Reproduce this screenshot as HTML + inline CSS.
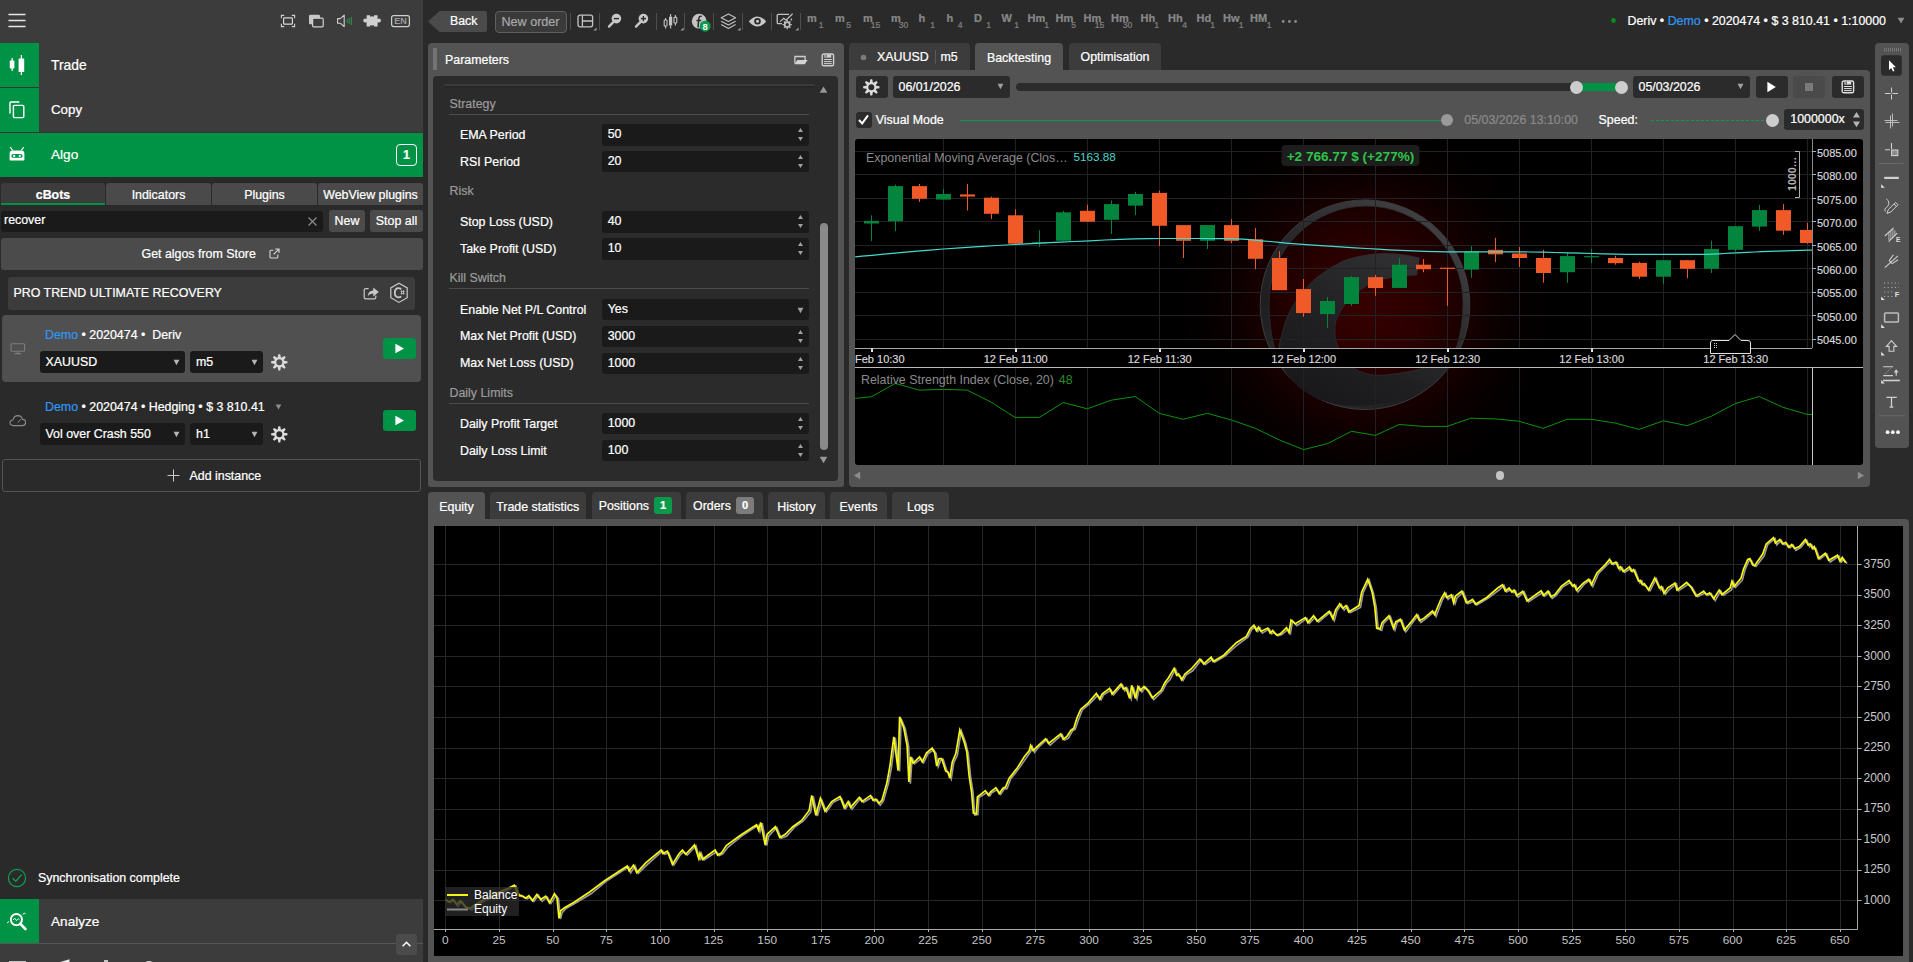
<!DOCTYPE html>
<html lang="en"><head><meta charset="utf-8"><title>cTrader Algo Backtesting</title>
<style>
html,body{margin:0;padding:0;background:#2a2a2a;}
body{width:1913px;height:962px;overflow:hidden;position:relative;font-family:"Liberation Sans",sans-serif;font-size:12.4px;color:#fff;}
#root{position:absolute;left:0;top:0;width:1913px;height:962px;overflow:hidden;background:#2a2a2a;}
#root div,#root svg{position:absolute;box-sizing:border-box;}
.t{white-space:nowrap;-webkit-text-stroke:0.22px currentColor;}
.ax{font-family:"Liberation Sans",sans-serif;font-size:11px;fill:#d8d8d8;}
</style></head>
<body><div id="root">
<!-- left panel -->
<div style="left:0px;top:0px;width:423px;height:962px;background:#2a2a2a;"></div>
<div style="left:0px;top:0px;width:423px;height:133px;background:#3c3c3c;"></div>
<svg style="left:8px;top:13px;" width="18" height="15" viewBox="0 0 18 15"><path d="M0.5 1.5H17.5M0.5 7.5H17.5M0.5 13.5H17.5" stroke="#e6e6e6" stroke-width="1.4" fill="none"/></svg>
<svg style="left:280px;top:14px;" width="17" height="14" viewBox="0 0 17 14"><path d="M1.4 4.2V1.4H4.2M11.8 1.4H14.6V4.2M14.6 9.8V12.6H11.8M4.2 12.6H1.4V9.8" stroke="#d0d0d0" stroke-width="1.1" fill="none"/><rect x="3.6" y="3.8" width="8.8" height="6.4" rx="0.8" stroke="#d6d6d6" stroke-width="1.2" fill="none"/></svg>
<svg style="left:308px;top:14px;" width="17" height="14" viewBox="0 0 17 14"><rect x="1" y="0.8" width="11" height="9.5" rx="1.2" fill="#c8c8c8"/><rect x="4.6" y="4.2" width="10.6" height="8.6" rx="1" fill="#3c3c3c" stroke="#d0d0d0" stroke-width="1.2"/></svg>
<svg style="left:336px;top:14px;" width="18" height="14" viewBox="0 0 18 14"><path d="M1.6 4.6H4.2L8.2 1.2V12.6L4.2 9.2H1.6Z" stroke="#d0d0d0" stroke-width="1.1" fill="none" stroke-linejoin="round"/><path d="M11.3 5V9" stroke="#2e8b45" stroke-width="1"/><path d="M13.3 4V10" stroke="#2e8b45" stroke-width="1"/><path d="M15.3 3V11" stroke="#2e8b45" stroke-width="1.2"/></svg>
<svg style="left:362px;top:14px;" width="21" height="14" viewBox="0 0 21 14"><path d="M4.6 1.2H8.2V2.8Q10.2 1.6 12 2.8V1.2H15.6V5Q18.6 3.6 19 6.6Q18.6 9.4 15.6 8.2V12.6H12V11Q10.2 12.2 8.2 11V12.6H4.6V8.2Q1.6 9.4 1.2 6.6Q1.6 3.6 4.6 5Z" fill="#cfcfcf"/></svg>
<svg style="left:390px;top:14px;" width="21" height="14" viewBox="0 0 21 14"><rect x="1.6" y="1.6" width="17.8" height="11" rx="2" stroke="#d0d0d0" stroke-width="1.2" fill="none"/><text x="10.5" y="10.2" font-family="Liberation Sans,sans-serif" font-size="8.4" font-weight="700" fill="#9c9c9c" text-anchor="middle" textLength="12.6" lengthAdjust="spacingAndGlyphs">EN</text></svg>
<div style="left:0px;top:43px;width:39px;height:44px;background:#009345;"></div>
<div style="left:0px;top:87px;width:39px;height:1px;background:#353535;"></div>
<div style="left:0px;top:88px;width:39px;height:44px;background:#009345;"></div>
<div style="left:0px;top:132px;width:423px;height:1px;background:#353535;"></div>
<div style="left:0px;top:133px;width:423px;height:44px;background:#009345;"></div>
<div class="t" style="left:51px;top:56.0px;height:18px;line-height:18px;color:#fff;font-size:13.9px;font-weight:400;">Trade</div>
<div class="t" style="left:51px;top:101.0px;height:18px;line-height:18px;color:#fff;font-size:13.3px;font-weight:400;">Copy</div>
<div class="t" style="left:51px;top:146.0px;height:18px;line-height:18px;color:#fff;font-size:13.6px;font-weight:400;">Algo</div>
<svg style="left:9px;top:54px;" width="17" height="22" viewBox="0 0 17 22"><path d="M3.2 4V17" stroke="#fff" stroke-width="1.2"/><rect x="0.8" y="6.4" width="4.6" height="8" rx="0.6" fill="#fff"/><path d="M12.4 1V21" stroke="#fff" stroke-width="1.2"/><rect x="9.6" y="4.4" width="5.6" height="13.6" rx="0.6" fill="#fff"/></svg>
<svg style="left:9px;top:101px;" width="17" height="18" viewBox="0 0 17 18"><path d="M10.4 1H2.2Q1 1 1 2.2V12.6" stroke="#fff" stroke-width="1.4" fill="none"/><rect x="4.4" y="4.4" width="10.4" height="12.2" rx="1" stroke="#fff" stroke-width="1.4" fill="none"/></svg>
<svg style="left:9px;top:146px;" width="17" height="16" viewBox="0 0 17 16"><path d="M1.2 1L3.6 4.4M14.8 1L12.4 4.4" stroke="#fff" stroke-width="1.1"/><path d="M3.6 4.6H12.4Q15.4 4.6 15.4 8V13.4Q15.4 14.6 14.2 14.6H1.8Q0.6 14.6 0.6 13.4V8Q0.6 4.6 3.6 4.6Z" fill="#fff"/><rect x="2.4" y="8" width="11.2" height="3.8" rx="1.9" fill="#009345"/><circle cx="5.2" cy="9.9" r="1.15" fill="#fff"/><circle cx="10.8" cy="9.9" r="1.15" fill="#fff"/></svg>
<div style="left:396px;top:144px;width:21px;height:22px;background:transparent;border:1.3px solid #fff;border-radius:4px;"></div>
<div class="t" style="left:396px;width:21px;text-align:center;top:147.0px;height:16px;line-height:16px;color:#fff;font-size:12.4px;font-weight:700;">1</div>
<div style="left:1px;top:183px;width:104px;height:22px;background:#3c3c3c;border-radius:3px 3px 0 0;"></div>
<div class="t" style="left:1px;width:104px;text-align:center;top:186.5px;height:16px;line-height:16px;color:#fff;font-size:12.4px;font-weight:700;">cBots</div>
<div style="left:106px;top:183px;width:105px;height:22px;background:#4a4a4a;border-radius:3px 3px 0 0;"></div>
<div class="t" style="left:106px;width:105px;text-align:center;top:186.5px;height:16px;line-height:16px;color:#fff;font-size:12.4px;font-weight:400;">Indicators</div>
<div style="left:212px;top:183px;width:105px;height:22px;background:#4a4a4a;border-radius:3px 3px 0 0;"></div>
<div class="t" style="left:212px;width:105px;text-align:center;top:186.5px;height:16px;line-height:16px;color:#fff;font-size:12.4px;font-weight:400;">Plugins</div>
<div style="left:318px;top:183px;width:105px;height:22px;background:#4a4a4a;border-radius:3px 3px 0 0;"></div>
<div class="t" style="left:318px;width:105px;text-align:center;top:186.5px;height:16px;line-height:16px;color:#fff;font-size:12.4px;font-weight:400;">WebView plugins</div>
<div style="left:1px;top:203px;width:104px;height:2px;background:#009345;"></div>
<div style="left:1px;top:211px;width:322px;height:21px;background:#1a1a1a;border-radius:3px;"></div>
<div class="t" style="left:4px;top:212.0px;height:16px;line-height:16px;color:#fff;font-size:12.4px;font-weight:400;">recover</div>
<svg style="left:307px;top:216px;" width="11" height="11" viewBox="0 0 11 11"><path d="M1.5 1.5L9.5 9.5M9.5 1.5L1.5 9.5" stroke="#8a8a8a" stroke-width="1.2"/></svg>
<div style="left:329px;top:210px;width:36px;height:22px;background:#4b4b4b;border-radius:3px;"></div>
<div class="t" style="left:329px;width:36px;text-align:center;top:213.0px;height:16px;line-height:16px;color:#fff;font-size:12.4px;font-weight:400;">New</div>
<div style="left:370px;top:210px;width:53px;height:22px;background:#4b4b4b;border-radius:3px;"></div>
<div class="t" style="left:370px;width:53px;text-align:center;top:213.0px;height:16px;line-height:16px;color:#fff;font-size:12.4px;font-weight:400;">Stop all</div>
<div style="left:1px;top:238px;width:422px;height:32px;background:#4b4b4b;border-radius:3px;"></div>
<div class="t" style="left:141.5px;top:246.0px;height:16px;line-height:16px;color:#fff;font-size:12.4px;font-weight:400;">Get algos from Store</div>
<svg style="left:269px;top:248px;" width="11" height="11" viewBox="0 0 11 11"><path d="M4.4 2.2H2Q1 2.2 1 3.2V9Q1 10 2 10H7.8Q8.8 10 8.8 9V6.6" stroke="#d6d6d6" stroke-width="1.1" fill="none"/><path d="M4.6 6.4L9.6 1.4M6.2 1H10V4.8" stroke="#d6d6d6" stroke-width="1.2" fill="none"/></svg>
<div style="left:8px;top:277px;width:407px;height:33px;background:#3c3c3c;border-radius:3px;"></div>
<div class="t" style="left:13.5px;top:284.5px;height:16px;line-height:16px;color:#fff;font-size:12.4px;font-weight:400;">PRO TREND ULTIMATE RECOVERY</div>
<svg style="left:363px;top:286px;" width="17" height="14" viewBox="0 0 17 14"><path d="M5.6 2.6H2.6Q1.2 2.6 1.2 4V11.4Q1.2 12.8 2.6 12.8H11.4Q12.8 12.8 12.8 11.4V9.6" stroke="#c8c8c8" stroke-width="1.2" fill="none"/><path d="M4.8 10Q5.2 4.6 10.2 4.4V1.4L15.8 6L10.2 10.4V7.4Q6.8 7.2 4.8 10Z" fill="#c8c8c8"/></svg>
<svg style="left:389px;top:282px;" width="20" height="22" viewBox="0 0 20 22"><path d="M10 1.2L18.2 5.9V15.7L10 20.4L1.8 15.7V5.9Z" stroke="#c8c8c8" stroke-width="1.2" fill="none"/><path d="M12.2 7.2Q10.8 6 9 6.2Q5.8 6.8 5.8 10.8Q5.8 14.8 9 15.4Q10.8 15.6 12.2 14.4" stroke="#c8c8c8" stroke-width="1.8" fill="none"/><path d="M12.6 8.2V12.6M14.6 8.2V12.6M11.6 9.4H15.6M11.6 11.4H15.6" stroke="#c8c8c8" stroke-width="0.8"/></svg>
<div style="left:2px;top:315px;width:419px;height:67px;background:#505050;border-radius:4px;"></div>
<svg style="left:10px;top:343px;" width="16" height="12" viewBox="0 0 16 12"><rect x="1" y="0.8" width="13.6" height="7.4" rx="1" stroke="#7e7e7e" stroke-width="1.1" fill="none"/><path d="M7.8 8.4V10.4M4.6 10.6H11" stroke="#7e7e7e" stroke-width="1.2"/></svg>
<div class="t" style="left:45px;top:326.6px;height:16px;line-height:16px;color:#fff;font-size:12.4px;font-weight:400;"><span style="color:#2f96f3">Demo</span> • 2020474 •&nbsp; Deriv</div>
<div style="left:40px;top:351px;width:145px;height:22px;background:#1a1a1a;border-radius:3px;"></div>
<div class="t" style="left:45.5px;top:354.0px;height:16px;line-height:16px;color:#fff;font-size:12.4px;font-weight:400;">XAUUSD</div>
<svg style="left:173px;top:359px;" width="7" height="7" viewBox="0 0 7 7"><path d="M0.6 0.8H6.4L3.5 6.2Z" fill="#b4b4b4"/></svg>
<div style="left:190px;top:351px;width:73px;height:22px;background:#1a1a1a;border-radius:3px;"></div>
<div class="t" style="left:196px;top:354.0px;height:16px;line-height:16px;color:#fff;font-size:12.4px;font-weight:400;">m5</div>
<svg style="left:251px;top:359px;" width="7" height="7" viewBox="0 0 7 7"><path d="M0.6 0.8H6.4L3.5 6.2Z" fill="#b4b4b4"/></svg>
<svg style="left:270.7px;top:353.7px;" width="17" height="17" viewBox="0 0 17 17"><path fill-rule="evenodd" fill="#dcdcdc" d="M6.42 3.77L6.75 3.23L7.37 0.15L9.23 0.15L9.85 3.23L10.18 3.77L10.79 3.62L13.40 1.88L14.72 3.20L12.98 5.81L12.83 6.42L13.37 6.75L16.45 7.37L16.45 9.23L13.37 9.85L12.83 10.18L12.98 10.79L14.72 13.40L13.40 14.72L10.79 12.98L10.18 12.83L9.85 13.37L9.23 16.45L7.37 16.45L6.75 13.37L6.42 12.83L5.81 12.98L3.20 14.72L1.88 13.40L3.62 10.79L3.77 10.18L3.23 9.85L0.15 9.23L0.15 7.37L3.23 6.75L3.77 6.42L3.62 5.81L1.88 3.20L3.20 1.88L5.81 3.62ZM11.30 8.30A3.0 3.0 0 1 0 5.30 8.30A3.0 3.0 0 1 0 11.30 8.30Z"/></svg>
<div style="left:383px;top:338px;width:33px;height:21px;background:#009345;border-radius:3px;"></div>
<svg style="left:394px;top:343px;" width="11" height="11" viewBox="0 0 11 11"><path d="M1.4 0.8L10 5.5L1.4 10.2Z" fill="#fff"/></svg>
<svg style="left:9px;top:414px;" width="18" height="13" viewBox="0 0 18 13"><path d="M4.4 11.6Q1 11.4 1 8.6Q1.2 6 4 6Q4.8 1.6 9 1.6Q12.8 1.8 13.4 5.4Q16.6 5.6 16.6 8.6Q16.4 11.4 13.4 11.6Z" stroke="#8a8a8a" stroke-width="1.1" fill="none"/><path d="M8.8 8.6L11.6 5.4" stroke="#8a8a8a" stroke-width="1"/></svg>
<div class="t" style="left:45px;top:398.6px;height:16px;line-height:16px;color:#fff;font-size:12.4px;font-weight:400;"><span style="color:#2f96f3">Demo</span> • 2020474 • Hedging • $ 3 810.41</div>
<div style="left:40px;top:423px;width:145px;height:22px;background:#1a1a1a;border-radius:3px;"></div>
<div class="t" style="left:45.5px;top:426.0px;height:16px;line-height:16px;color:#fff;font-size:12.4px;font-weight:400;">Vol over Crash 550</div>
<svg style="left:173px;top:431px;" width="7" height="7" viewBox="0 0 7 7"><path d="M0.6 0.8H6.4L3.5 6.2Z" fill="#b4b4b4"/></svg>
<div style="left:190px;top:423px;width:73px;height:22px;background:#1a1a1a;border-radius:3px;"></div>
<div class="t" style="left:196px;top:426.0px;height:16px;line-height:16px;color:#fff;font-size:12.4px;font-weight:400;">h1</div>
<svg style="left:251px;top:431px;" width="7" height="7" viewBox="0 0 7 7"><path d="M0.6 0.8H6.4L3.5 6.2Z" fill="#b4b4b4"/></svg>
<svg style="left:270.7px;top:425.7px;" width="17" height="17" viewBox="0 0 17 17"><path fill-rule="evenodd" fill="#dcdcdc" d="M6.42 3.77L6.75 3.23L7.37 0.15L9.23 0.15L9.85 3.23L10.18 3.77L10.79 3.62L13.40 1.88L14.72 3.20L12.98 5.81L12.83 6.42L13.37 6.75L16.45 7.37L16.45 9.23L13.37 9.85L12.83 10.18L12.98 10.79L14.72 13.40L13.40 14.72L10.79 12.98L10.18 12.83L9.85 13.37L9.23 16.45L7.37 16.45L6.75 13.37L6.42 12.83L5.81 12.98L3.20 14.72L1.88 13.40L3.62 10.79L3.77 10.18L3.23 9.85L0.15 9.23L0.15 7.37L3.23 6.75L3.77 6.42L3.62 5.81L1.88 3.20L3.20 1.88L5.81 3.62ZM11.30 8.30A3.0 3.0 0 1 0 5.30 8.30A3.0 3.0 0 1 0 11.30 8.30Z"/></svg>
<div style="left:383px;top:410px;width:33px;height:21px;background:#009345;border-radius:3px;"></div>
<svg style="left:394px;top:415px;" width="11" height="11" viewBox="0 0 11 11"><path d="M1.4 0.8L10 5.5L1.4 10.2Z" fill="#fff"/></svg>
<svg style="left:275px;top:404px;" width="7" height="6" viewBox="0 0 7 6"><path d="M0.6 0.6H6.4L3.5 5.6Z" fill="#8c8c8c"/></svg>
<div style="left:2px;top:459px;width:419px;height:33px;background:#2a2a2a;border:1px solid #545454;border-radius:3px;"></div>
<svg style="left:167px;top:469px;" width="13" height="13" viewBox="0 0 13 13"><path d="M6.5 0.5V12.5M0.5 6.5H12.5" stroke="#c8c8c8" stroke-width="1"/></svg>
<div class="t" style="left:189.5px;top:467.5px;height:16px;line-height:16px;color:#fff;font-size:12.4px;font-weight:400;">Add instance</div>
<svg style="left:7px;top:868px;" width="20" height="20" viewBox="0 0 20 20"><circle cx="10" cy="10" r="8.6" stroke="#10a050" stroke-width="1.2" fill="none"/><path d="M5.6 10.2L8.8 13.2L14.6 6.6" stroke="#10a050" stroke-width="1.3" fill="none"/></svg>
<div class="t" style="left:38px;top:869.5px;height:16px;line-height:16px;color:#fff;font-size:12.4px;font-weight:400;">Synchronisation complete</div>
<div style="left:0px;top:899px;width:423px;height:63px;background:#3c3c3c;"></div>
<div style="left:0px;top:899px;width:39px;height:44px;background:#009345;"></div>
<div class="t" style="left:51px;top:912.8px;height:18px;line-height:18px;color:#fff;font-size:13.6px;font-weight:400;">Analyze</div>
<svg style="left:6px;top:911px;" width="22" height="20" viewBox="0 0 22 20"><circle cx="10.4" cy="8.6" r="5.6" stroke="#fff" stroke-width="1.9" fill="none"/><path d="M14.4 12.8L19.4 18" stroke="#fff" stroke-width="2.6" stroke-linecap="round"/><path d="M7 9L8.8 7.2L10.4 9.6L12.2 7.6L13.6 8.8" stroke="#fff" stroke-width="0.9" fill="none"/><path d="M1 12L3.2 10.4M16.6 3.4L18.6 2L19.4 3.2" stroke="#fff" stroke-width="0.9" fill="none"/></svg>
<div style="left:0px;top:943px;width:423px;height:1px;background:#565656;"></div>
<div style="left:396px;top:934px;width:21px;height:21px;background:#4b4b4b;border-radius:3px;"></div>
<svg style="left:401px;top:940px;" width="11" height="8" viewBox="0 0 11 8"><path d="M1.6 6.2L5.5 2.2L9.4 6.2" stroke="#fff" stroke-width="1.5" fill="none"/></svg>
<div style="left:9px;top:960.6px;width:17px;height:2px;background:#c4c4c4;"></div>
<svg style="left:54px;top:957.6px;" width="18" height="6" viewBox="0 0 18 6"><path d="M1 5.5L15.5 1.2V6H1Z" fill="#e8e8e8"/></svg>
<div style="left:103.5px;top:960.4px;width:4.5px;height:2px;background:#c4c4c4;"></div>
<svg style="left:141px;top:958.6px;" width="16" height="6" viewBox="0 0 16 6"><path d="M1.5 6Q8 -0.5 14.5 6" stroke="#d8d8d8" stroke-width="1.2" fill="none"/></svg>
<div style="left:423px;top:0px;width:1490px;height:962px;background:#2a2a2a;"></div>
<!-- top toolbar -->
<svg style="left:427px;top:10px;" width="61" height="23" viewBox="0 0 61 23"><path d="M1 11.5L12.6 1H58Q60 1 60 3V20Q60 22 58 22H12.6Z" fill="#4b4b4b"/></svg>
<div class="t" style="left:450px;top:13.0px;height:16px;line-height:16px;color:#fff;font-size:12.3px;font-weight:400;">Back</div>
<div style="left:494.5px;top:10.5px;width:72px;height:22.5px;background:#3a3a3a;border:1px solid #606060;border-radius:4px;"></div>
<div class="t" style="left:494px;width:73px;text-align:center;top:13.5px;height:16px;line-height:16px;color:#a8a8a8;font-size:12.6px;font-weight:400;">New order</div>
<div style="left:570px;top:13px;width:1px;height:17px;background:#4e4e4e;"></div>
<svg style="left:577px;top:14px;" width="17" height="15" viewBox="0 0 17 15"><rect x="1" y="1.2" width="14.6" height="11.6" rx="2" stroke="#c4c4c4" stroke-width="1.3" fill="none"/><path d="M5.4 1.2V12.8M5.4 7H15.6" stroke="#c4c4c4" stroke-width="1.3"/></svg>
<svg style="left:593px;top:27px;" width="4" height="4" viewBox="0 0 4 4"><path d="M3.6 0.4V3.6H0.4Z" fill="#9a9a9a"/></svg>
<div style="left:599px;top:13px;width:1px;height:17px;background:#4e4e4e;"></div>
<svg style="left:607px;top:13px;" width="15" height="16" viewBox="0 0 15 16"><circle cx="9.4" cy="5.6" r="4.8" fill="#c8c8c8"/><path d="M6 9.4L2 13.6" stroke="#c8c8c8" stroke-width="2.4" stroke-linecap="round"/><path d="M6.8 5.6H12" stroke="#2a2a2a" stroke-width="1.4"/></svg>
<svg style="left:634px;top:13px;" width="15" height="16" viewBox="0 0 15 16"><circle cx="9.4" cy="5.6" r="4.8" fill="#c8c8c8"/><path d="M6 9.4L2 13.6" stroke="#c8c8c8" stroke-width="2.4" stroke-linecap="round"/><path d="M6.8 5.6H12" stroke="#2a2a2a" stroke-width="1.4"/><path d="M9.4 3V8.2" stroke="#2a2a2a" stroke-width="1.4"/></svg>
<div style="left:656px;top:13px;width:1px;height:17px;background:#4e4e4e;"></div>
<svg style="left:663px;top:13px;" width="16" height="17" viewBox="0 0 16 17"><g stroke="#c4c4c4" fill="none" stroke-width="1.1"><path d="M2.6 5V7M2.6 13V15.4M7.6 1V3.4M7.6 12.6V15.4M12.4 2V4.4M12.4 10V12.6"/><rect x="1.2" y="7" width="2.8" height="6" rx="0.6"/><rect x="11" y="4.4" width="2.8" height="5.6" rx="0.6"/></g><rect x="6" y="3.4" width="3.2" height="9.2" rx="0.6" fill="#c4c4c4"/></svg>
<svg style="left:680px;top:27px;" width="4" height="4" viewBox="0 0 4 4"><path d="M3.6 0.4V3.6H0.4Z" fill="#9a9a9a"/></svg>
<div style="left:684px;top:13px;width:1px;height:17px;background:#4e4e4e;"></div>
<svg style="left:691px;top:13px;" width="22" height="19" viewBox="0 0 22 19"><circle cx="8.2" cy="8.2" r="7.4" fill="#c4c4c4"/><path d="M10.8 3.4Q8 2.6 7.8 5.6L7 14.4M5.4 7.6H10.2" stroke="#2a2a2a" stroke-width="1.5" fill="none"/><circle cx="14.2" cy="13.2" r="5.5" fill="#0a9a4a"/><text x="14.2" y="16.6" font-family="Liberation Sans,sans-serif" font-size="9.5" font-weight="700" fill="#fff" text-anchor="middle">8</text></svg>
<div style="left:713px;top:13px;width:1px;height:17px;background:#4e4e4e;"></div>
<svg style="left:720px;top:13px;" width="17" height="17" viewBox="0 0 17 17"><g stroke="#c4c4c4" stroke-width="1.1" fill="none" stroke-linejoin="round"><path d="M8.4 1L15.6 4.8L8.4 8.6L1.2 4.8Z"/><path d="M1.2 8.2L8.4 12L15.6 8.2M1.2 11.6L8.4 15.4L15.6 11.6"/></g></svg>
<svg style="left:737px;top:27px;" width="4" height="4" viewBox="0 0 4 4"><path d="M3.6 0.4V3.6H0.4Z" fill="#9a9a9a"/></svg>
<div style="left:742px;top:13px;width:1px;height:17px;background:#4e4e4e;"></div>
<svg style="left:748px;top:15px;" width="19" height="13" viewBox="0 0 19 13"><path d="M0.8 6.5Q9.5 -3.6 18.2 6.5Q9.5 16.6 0.8 6.5Z" fill="#c8c8c8"/><circle cx="9.5" cy="6.2" r="3.3" fill="#2a2a2a"/><circle cx="9.5" cy="6.2" r="1.5" fill="#c8c8c8"/></svg>
<div style="left:771px;top:13px;width:1px;height:17px;background:#4e4e4e;"></div>
<svg style="left:776px;top:13px;" width="19" height="17" viewBox="0 0 19 17"><path d="M13 1.4H2.4Q1.2 1.4 1.2 2.6V9.4Q1.2 10.6 2.4 10.6H6" stroke="#c4c4c4" stroke-width="1.3" fill="none"/><path d="M4 8.6L7.8 5.4L10 7.2L16.6 0.8" stroke="#c4c4c4" stroke-width="1.2" fill="none"/><path d="M15.4 5.6V7.4" stroke="#c4c4c4" stroke-width="1.4"/><g stroke="#c4c4c4" fill="none"><circle cx="11.2" cy="11.6" r="2.5" stroke-width="1.6"/><path d="M11.2 7V8.6M11.2 14.6V16.2M6.6 11.6H8.2M14.2 11.6H15.8M8 8.4L9.1 9.5M13.3 13.7L14.4 14.8M14.4 8.4L13.3 9.5M9.1 13.7L8 14.8" stroke-width="1.4"/></g></svg>
<svg style="left:795px;top:27px;" width="4" height="4" viewBox="0 0 4 4"><path d="M3.6 0.4V3.6H0.4Z" fill="#9a9a9a"/></svg>
<div style="left:800px;top:13px;width:1px;height:17px;background:#4e4e4e;"></div>
<div class="t" style="left:807px;top:10.5px;height:14px;line-height:14px;color:#888888;font-size:11px;font-weight:700;">m</div>
<div class="t" style="left:818.7px;top:19.5px;height:10px;line-height:10px;color:#808080;font-size:8.6px;font-weight:400;">1</div>
<div class="t" style="left:835px;top:10.5px;height:14px;line-height:14px;color:#888888;font-size:11px;font-weight:700;">m</div>
<div class="t" style="left:846.2px;top:19.5px;height:10px;line-height:10px;color:#808080;font-size:8.6px;font-weight:400;">5</div>
<div class="t" style="left:863px;top:10.5px;height:14px;line-height:14px;color:#888888;font-size:11px;font-weight:700;">m</div>
<div class="t" style="left:870.7px;top:19.5px;height:10px;line-height:10px;color:#808080;font-size:8.6px;font-weight:400;">15</div>
<div class="t" style="left:891px;top:10.5px;height:14px;line-height:14px;color:#888888;font-size:11px;font-weight:700;">m</div>
<div class="t" style="left:898.7px;top:19.5px;height:10px;line-height:10px;color:#808080;font-size:8.6px;font-weight:400;">30</div>
<div class="t" style="left:918.5px;top:10.5px;height:14px;line-height:14px;color:#888888;font-size:11px;font-weight:700;">h</div>
<div class="t" style="left:930.2px;top:19.5px;height:10px;line-height:10px;color:#808080;font-size:8.6px;font-weight:400;">1</div>
<div class="t" style="left:946.5px;top:10.5px;height:14px;line-height:14px;color:#888888;font-size:11px;font-weight:700;">h</div>
<div class="t" style="left:957.7px;top:19.5px;height:10px;line-height:10px;color:#808080;font-size:8.6px;font-weight:400;">4</div>
<div class="t" style="left:974px;top:10.5px;height:14px;line-height:14px;color:#888888;font-size:11px;font-weight:700;">D</div>
<div class="t" style="left:986.2px;top:19.5px;height:10px;line-height:10px;color:#808080;font-size:8.6px;font-weight:400;">1</div>
<div class="t" style="left:1001.5px;top:10.5px;height:14px;line-height:14px;color:#888888;font-size:11px;font-weight:700;">W</div>
<div class="t" style="left:1014.2px;top:19.5px;height:10px;line-height:10px;color:#808080;font-size:8.6px;font-weight:400;">1</div>
<div class="t" style="left:1027.5px;top:10.5px;height:14px;line-height:14px;color:#888888;font-size:11px;font-weight:700;">Hm</div>
<div class="t" style="left:1044.2px;top:19.5px;height:10px;line-height:10px;color:#808080;font-size:8.6px;font-weight:400;">1</div>
<div class="t" style="left:1055.5px;top:10.5px;height:14px;line-height:14px;color:#888888;font-size:11px;font-weight:700;">Hm</div>
<div class="t" style="left:1071.2px;top:19.5px;height:10px;line-height:10px;color:#808080;font-size:8.6px;font-weight:400;">5</div>
<div class="t" style="left:1083.5px;top:10.5px;height:14px;line-height:14px;color:#888888;font-size:11px;font-weight:700;">Hm</div>
<div class="t" style="left:1094.7px;top:19.5px;height:10px;line-height:10px;color:#808080;font-size:8.6px;font-weight:400;">15</div>
<div class="t" style="left:1111px;top:10.5px;height:14px;line-height:14px;color:#888888;font-size:11px;font-weight:700;">Hm</div>
<div class="t" style="left:1122.7px;top:19.5px;height:10px;line-height:10px;color:#808080;font-size:8.6px;font-weight:400;">30</div>
<div class="t" style="left:1140.5px;top:10.5px;height:14px;line-height:14px;color:#888888;font-size:11px;font-weight:700;">Hh</div>
<div class="t" style="left:1154.2px;top:19.5px;height:10px;line-height:10px;color:#808080;font-size:8.6px;font-weight:400;">1</div>
<div class="t" style="left:1168px;top:10.5px;height:14px;line-height:14px;color:#888888;font-size:11px;font-weight:700;">Hh</div>
<div class="t" style="left:1182.2px;top:19.5px;height:10px;line-height:10px;color:#808080;font-size:8.6px;font-weight:400;">4</div>
<div class="t" style="left:1196.5px;top:10.5px;height:14px;line-height:14px;color:#888888;font-size:11px;font-weight:700;">Hd</div>
<div class="t" style="left:1210.2px;top:19.5px;height:10px;line-height:10px;color:#808080;font-size:8.6px;font-weight:400;">1</div>
<div class="t" style="left:1223px;top:10.5px;height:14px;line-height:14px;color:#888888;font-size:11px;font-weight:700;">Hw</div>
<div class="t" style="left:1238.7px;top:19.5px;height:10px;line-height:10px;color:#808080;font-size:8.6px;font-weight:400;">1</div>
<div class="t" style="left:1250px;top:10.5px;height:14px;line-height:14px;color:#888888;font-size:11px;font-weight:700;">HM</div>
<div class="t" style="left:1266.7px;top:19.5px;height:10px;line-height:10px;color:#808080;font-size:8.6px;font-weight:400;">1</div>
<svg style="left:1281px;top:19.2px;" width="17" height="5" viewBox="0 0 17 5"><circle cx="2.2" cy="2.5" r="1.4" fill="#8a8a8a"/><circle cx="8.4" cy="2.5" r="1.4" fill="#8a8a8a"/><circle cx="14.6" cy="2.5" r="1.4" fill="#8a8a8a"/></svg>
<svg style="left:1610px;top:17px;" width="7" height="7" viewBox="0 0 7 7"><circle cx="3.5" cy="3.5" r="2.4" fill="#0a8a1a"/></svg>
<div class="t" style="left:1627.5px;top:12.5px;height:16px;line-height:16px;color:#fff;font-size:12.4px;font-weight:400;">Deriv • <span style="color:#2f96f3">Demo</span> • 2020474 • $ 3 810.41 • 1:10000</div>
<svg style="left:1897px;top:17px;" width="8" height="7" viewBox="0 0 8 7"><path d="M0.6 0.8H7.4L4 6.4Z" fill="#8c8c8c"/></svg>
<!-- parameters -->
<div style="left:428px;top:43px;width:416px;height:444px;background:#535353;border-radius:4px 4px 3px 3px;"></div>
<div style="left:433px;top:48px;width:1.8px;height:22px;background:#747474;"></div>
<div style="left:435.3px;top:48px;width:1.8px;height:22px;background:#747474;"></div>
<div class="t" style="left:445px;top:51.5px;height:16px;line-height:16px;color:#fff;font-size:12.4px;font-weight:400;">Parameters</div>
<svg style="left:793px;top:54px;" width="16" height="12" viewBox="0 0 16 12"><path d="M1.9 9.6V2.5H12.1V6" fill="none" stroke="#cfcfcf" stroke-width="1.3"/><path d="M4.4 6H14.6L11.8 10.3H1.4Z" fill="#d4d4d4"/></svg>
<svg style="left:821px;top:53px;" width="14" height="14" viewBox="0 0 14 14"><rect x="1.2" y="1" width="11.4" height="11.8" rx="1.6" fill="none" stroke="#d0d0d0" stroke-width="1.4"/><rect x="3.4" y="1.4" width="6.8" height="3.2" fill="#d0d0d0"/><rect x="4.6" y="1.6" width="1" height="2.4" fill="#535353"/><path d="M3 6.5H10.8M3 8.6H10.8M3 10.6H10.8" stroke="#d0d0d0" stroke-width="1"/></svg>
<div style="left:433px;top:75.5px;width:405px;height:405.5px;background:#2b2b2b;border-radius:4px;"></div>
<div style="left:444px;top:84px;width:370px;height:1.6px;background:#3a3a3a;"></div>
<div style="left:444px;top:85.6px;width:370px;height:2.4px;background:transparent;background:linear-gradient(#232323,#2b2b2b);"></div>
<svg style="left:819px;top:86px;" width="9" height="7" viewBox="0 0 9 7"><path d="M4.5 0.5L8.3 6.8H0.7Z" fill="#989898"/></svg>
<svg style="left:819px;top:456px;" width="9" height="8" viewBox="0 0 9 8"><path d="M0.7 0.8H8.3L4.5 7.2Z" fill="#989898"/></svg>
<div style="left:819.5px;top:223px;width:8px;height:227px;background:#8a8a8a;border-radius:4px;"></div>
<div class="t" style="left:449.5px;top:95.6px;height:16px;line-height:16px;color:#9a9a9a;font-size:12.4px;font-weight:400;">Strategy</div>
<div style="left:449px;top:114.1px;width:360px;height:1px;background:#4c4c4c;"></div>
<div class="t" style="left:460px;top:126.80000000000001px;height:16px;line-height:16px;color:#fff;font-size:12.4px;font-weight:400;">EMA Period</div>
<div style="left:602px;top:124.20000000000002px;width:207px;height:21.4px;background:#1a1a1a;border-radius:3px;"></div>
<div class="t" style="left:607.7px;top:126.0px;height:16px;line-height:16px;color:#fff;font-size:12.4px;font-weight:400;">50</div>
<svg style="left:797px;top:127.30000000000001px;" width="7" height="15" viewBox="0 0 7 15"><path d="M3.5 1L6 5H1Z" fill="#a0a0a0"/><path d="M1 10H6L3.5 14Z" fill="#a0a0a0"/></svg>
<div class="t" style="left:460px;top:153.6px;height:16px;line-height:16px;color:#fff;font-size:12.4px;font-weight:400;">RSI Period</div>
<div style="left:602px;top:151.0px;width:207px;height:21.4px;background:#1a1a1a;border-radius:3px;"></div>
<div class="t" style="left:607.7px;top:152.79999999999998px;height:16px;line-height:16px;color:#fff;font-size:12.4px;font-weight:400;">20</div>
<svg style="left:797px;top:154.1px;" width="7" height="15" viewBox="0 0 7 15"><path d="M3.5 1L6 5H1Z" fill="#a0a0a0"/><path d="M1 10H6L3.5 14Z" fill="#a0a0a0"/></svg>
<div class="t" style="left:449.5px;top:182.6px;height:16px;line-height:16px;color:#9a9a9a;font-size:12.4px;font-weight:400;">Risk</div>
<div class="t" style="left:460px;top:213.8px;height:16px;line-height:16px;color:#fff;font-size:12.4px;font-weight:400;">Stop Loss (USD)</div>
<div style="left:602px;top:211.20000000000002px;width:207px;height:21.4px;background:#1a1a1a;border-radius:3px;"></div>
<div class="t" style="left:607.7px;top:213.0px;height:16px;line-height:16px;color:#fff;font-size:12.4px;font-weight:400;">40</div>
<svg style="left:797px;top:214.3px;" width="7" height="15" viewBox="0 0 7 15"><path d="M3.5 1L6 5H1Z" fill="#a0a0a0"/><path d="M1 10H6L3.5 14Z" fill="#a0a0a0"/></svg>
<div class="t" style="left:460px;top:240.8px;height:16px;line-height:16px;color:#fff;font-size:12.4px;font-weight:400;">Take Profit (USD)</div>
<div style="left:602px;top:238.20000000000002px;width:207px;height:21.4px;background:#1a1a1a;border-radius:3px;"></div>
<div class="t" style="left:607.7px;top:240.0px;height:16px;line-height:16px;color:#fff;font-size:12.4px;font-weight:400;">10</div>
<svg style="left:797px;top:241.3px;" width="7" height="15" viewBox="0 0 7 15"><path d="M3.5 1L6 5H1Z" fill="#a0a0a0"/><path d="M1 10H6L3.5 14Z" fill="#a0a0a0"/></svg>
<div class="t" style="left:449.5px;top:269.6px;height:16px;line-height:16px;color:#9a9a9a;font-size:12.4px;font-weight:400;">Kill Switch</div>
<div style="left:449px;top:288.1px;width:360px;height:1px;background:#4c4c4c;"></div>
<div class="t" style="left:460px;top:301.6px;height:16px;line-height:16px;color:#fff;font-size:12.4px;font-weight:400;">Enable Net P/L Control</div>
<div style="left:602px;top:299.0px;width:207px;height:21.4px;background:#1a1a1a;border-radius:3px;"></div>
<div class="t" style="left:607.7px;top:300.8px;height:16px;line-height:16px;color:#fff;font-size:12.4px;font-weight:400;">Yes</div>
<svg style="left:797px;top:306.6px;" width="7" height="7" viewBox="0 0 7 7"><path d="M0.6 0.8H6.4L3.5 6.2Z" fill="#a0a0a0"/></svg>
<div class="t" style="left:460px;top:328.4px;height:16px;line-height:16px;color:#fff;font-size:12.4px;font-weight:400;">Max Net Profit (USD)</div>
<div style="left:602px;top:325.79999999999995px;width:207px;height:21.4px;background:#1a1a1a;border-radius:3px;"></div>
<div class="t" style="left:607.7px;top:327.59999999999997px;height:16px;line-height:16px;color:#fff;font-size:12.4px;font-weight:400;">3000</div>
<svg style="left:797px;top:328.9px;" width="7" height="15" viewBox="0 0 7 15"><path d="M3.5 1L6 5H1Z" fill="#a0a0a0"/><path d="M1 10H6L3.5 14Z" fill="#a0a0a0"/></svg>
<div class="t" style="left:460px;top:355.4px;height:16px;line-height:16px;color:#fff;font-size:12.4px;font-weight:400;">Max Net Loss (USD)</div>
<div style="left:602px;top:352.79999999999995px;width:207px;height:21.4px;background:#1a1a1a;border-radius:3px;"></div>
<div class="t" style="left:607.7px;top:354.59999999999997px;height:16px;line-height:16px;color:#fff;font-size:12.4px;font-weight:400;">1000</div>
<svg style="left:797px;top:355.9px;" width="7" height="15" viewBox="0 0 7 15"><path d="M3.5 1L6 5H1Z" fill="#a0a0a0"/><path d="M1 10H6L3.5 14Z" fill="#a0a0a0"/></svg>
<div class="t" style="left:449.5px;top:384.6px;height:16px;line-height:16px;color:#9a9a9a;font-size:12.4px;font-weight:400;">Daily Limits</div>
<div style="left:449px;top:403.1px;width:360px;height:1px;background:#4c4c4c;"></div>
<div class="t" style="left:460px;top:415.6px;height:16px;line-height:16px;color:#fff;font-size:12.4px;font-weight:400;">Daily Profit Target</div>
<div style="left:602px;top:413.0px;width:207px;height:21.4px;background:#1a1a1a;border-radius:3px;"></div>
<div class="t" style="left:607.7px;top:414.8px;height:16px;line-height:16px;color:#fff;font-size:12.4px;font-weight:400;">1000</div>
<svg style="left:797px;top:416.1px;" width="7" height="15" viewBox="0 0 7 15"><path d="M3.5 1L6 5H1Z" fill="#a0a0a0"/><path d="M1 10H6L3.5 14Z" fill="#a0a0a0"/></svg>
<div class="t" style="left:460px;top:442.6px;height:16px;line-height:16px;color:#fff;font-size:12.4px;font-weight:400;">Daily Loss Limit</div>
<div style="left:602px;top:440.0px;width:207px;height:21.4px;background:#1a1a1a;border-radius:3px;"></div>
<div class="t" style="left:607.7px;top:441.8px;height:16px;line-height:16px;color:#fff;font-size:12.4px;font-weight:400;">100</div>
<svg style="left:797px;top:443.1px;" width="7" height="15" viewBox="0 0 7 15"><path d="M3.5 1L6 5H1Z" fill="#a0a0a0"/><path d="M1 10H6L3.5 14Z" fill="#a0a0a0"/></svg>
<!-- backtesting panel -->
<div style="left:849px;top:43px;width:121px;height:28px;background:#3c3c3c;border-radius:4px 4px 0 0;"></div>
<svg style="left:860px;top:54px;" width="7" height="7" viewBox="0 0 7 7"><circle cx="3.5" cy="3.5" r="2.8" fill="#7c7c7c"/></svg>
<div class="t" style="left:877px;top:48.8px;height:16px;line-height:16px;color:#fff;font-size:12.4px;font-weight:400;">XAUUSD</div>
<div style="left:934.5px;top:50px;width:1px;height:14px;background:#5a5a5a;"></div>
<div class="t" style="left:940.5px;top:48.8px;height:16px;line-height:16px;color:#fff;font-size:12.4px;font-weight:400;">m5</div>
<div style="left:975px;top:43px;width:88px;height:28px;background:#535353;border-radius:4px 4px 0 0;"></div>
<div class="t" style="left:975px;width:88px;text-align:center;top:49.8px;height:16px;line-height:16px;color:#fff;font-size:12.4px;font-weight:400;">Backtesting</div>
<div style="left:1069px;top:43px;width:92px;height:28px;background:#3c3c3c;border-radius:4px 4px 0 0;"></div>
<div class="t" style="left:1069px;width:92px;text-align:center;top:48.8px;height:16px;line-height:16px;color:#fff;font-size:12.4px;font-weight:400;">Optimisation</div>
<div style="left:849px;top:70px;width:1020.5px;height:416.5px;background:#535353;border-radius:0 4px 4px 4px;"></div>
<div style="left:855.5px;top:76px;width:32.5px;height:22px;background:#2b2b2b;border-radius:3px;"></div>
<svg style="left:863.4px;top:78.7px;" width="17" height="17" viewBox="0 0 17 17"><path fill-rule="evenodd" fill="#dcdcdc" d="M6.42 3.77L6.75 3.23L7.37 0.15L9.23 0.15L9.85 3.23L10.18 3.77L10.79 3.62L13.40 1.88L14.72 3.20L12.98 5.81L12.83 6.42L13.37 6.75L16.45 7.37L16.45 9.23L13.37 9.85L12.83 10.18L12.98 10.79L14.72 13.40L13.40 14.72L10.79 12.98L10.18 12.83L9.85 13.37L9.23 16.45L7.37 16.45L6.75 13.37L6.42 12.83L5.81 12.98L3.20 14.72L1.88 13.40L3.62 10.79L3.77 10.18L3.23 9.85L0.15 9.23L0.15 7.37L3.23 6.75L3.77 6.42L3.62 5.81L1.88 3.20L3.20 1.88L5.81 3.62ZM11.30 8.30A3.0 3.0 0 1 0 5.30 8.30A3.0 3.0 0 1 0 11.30 8.30Z"/></svg>
<div style="left:893px;top:76px;width:117px;height:22px;background:#2b2b2b;border-radius:3px;"></div>
<div class="t" style="left:898.5px;top:78.5px;height:16px;line-height:16px;color:#fff;font-size:12.4px;font-weight:400;">06/01/2026</div>
<svg style="left:997px;top:83px;" width="7" height="7" viewBox="0 0 7 7"><path d="M0.6 0.8H6.4L3.5 6.2Z" fill="#a0a0a0"/></svg>
<div style="left:1016px;top:83px;width:606px;height:8px;background:#2b2b2b;border-radius:4px;"></div>
<div style="left:1576px;top:83px;width:45px;height:8px;background:#009345;"></div>
<div style="left:1570px;top:80.5px;width:13px;height:13px;background:#cdcdcd;border-radius:50%;"></div>
<div style="left:1615px;top:80.5px;width:13px;height:13px;background:#cdcdcd;border-radius:50%;"></div>
<div style="left:1633px;top:76px;width:117px;height:22px;background:#2b2b2b;border-radius:3px;"></div>
<div class="t" style="left:1638.5px;top:78.5px;height:16px;line-height:16px;color:#fff;font-size:12.4px;font-weight:400;">05/03/2026</div>
<svg style="left:1737px;top:83px;" width="7" height="7" viewBox="0 0 7 7"><path d="M0.6 0.8H6.4L3.5 6.2Z" fill="#a0a0a0"/></svg>
<div style="left:1755.5px;top:76px;width:32px;height:22px;background:#2b2b2b;border-radius:3px;"></div>
<svg style="left:1766px;top:81px;" width="11" height="12" viewBox="0 0 11 12"><path d="M1.4 0.8L9.8 6L1.4 11.2Z" fill="#fff"/></svg>
<div style="left:1793px;top:76px;width:32px;height:22px;background:#4a4a4a;border-radius:3px;"></div>
<div style="left:1805px;top:83px;width:8px;height:8px;background:#7a7a7a;"></div>
<div style="left:1831.5px;top:76px;width:32px;height:22px;background:#2b2b2b;border-radius:3px;"></div>
<svg style="left:1840.5px;top:80px;" width="14" height="14" viewBox="0 0 14 14"><rect x="1.2" y="1" width="11.4" height="11.8" rx="1.6" fill="none" stroke="#e0e0e0" stroke-width="1.4"/><rect x="3.4" y="1.4" width="6.8" height="3.2" fill="#e0e0e0"/><rect x="4.6" y="1.6" width="1" height="2.4" fill="#2b2b2b"/><path d="M3 6.5H10.8M3 8.6H10.8M3 10.6H10.8" stroke="#e0e0e0" stroke-width="1"/></svg>
<div style="left:855.5px;top:112px;width:16px;height:16px;background:#2b2b2b;border-radius:3px;"></div>
<svg style="left:857px;top:113px;" width="13" height="13" viewBox="0 0 13 13"><path d="M2 7L5.2 10.4L11 2.4" stroke="#fff" stroke-width="2" fill="none"/></svg>
<div class="t" style="left:875.8px;top:111.5px;height:16px;line-height:16px;color:#fff;font-size:12.4px;font-weight:400;">Visual Mode</div>
<div style="left:960px;top:120px;width:482px;height:1px;background:#0c9a4c;"></div>
<div style="left:1441px;top:114px;width:12px;height:12px;background:#9a9a9a;border-radius:50%;"></div>
<div class="t" style="left:1464.3px;top:111.5px;height:16px;line-height:16px;color:#8a8a8a;font-size:12.4px;font-weight:400;">05/03/2026 13:10:00</div>
<div class="t" style="left:1598.6px;top:111.5px;height:16px;line-height:16px;color:#fff;font-size:12.4px;font-weight:400;">Speed:</div>
<div style="left:1651px;top:120px;width:118px;height:1px;background:transparent;border-top:1px dashed #0c9a4c;"></div>
<div style="left:1766px;top:113.5px;width:13px;height:13px;background:#cdcdcd;border-radius:50%;"></div>
<div style="left:1784px;top:109px;width:80px;height:21px;background:#2b2b2b;border-radius:3px;"></div>
<div class="t" style="left:1790.3px;top:111.0px;height:16px;line-height:16px;color:#fff;font-size:12.4px;font-weight:400;">1000000x</div>
<svg style="left:1851.5px;top:111px;" width="9" height="18" viewBox="0 0 9 18"><path d="M4.5 1L8 6.6H1Z" fill="#b4b4b4"/><path d="M1 10.6H8L4.5 16.2Z" fill="#b4b4b4"/></svg>
<svg style="left:853px;top:471px;" width="8" height="9" viewBox="0 0 8 9"><path d="M7.2 0.8V8.2L0.8 4.5Z" fill="#8c8c8c"/></svg>
<svg style="left:1857px;top:471px;" width="8" height="9" viewBox="0 0 8 9"><path d="M0.8 0.8V8.2L7.2 4.5Z" fill="#8c8c8c"/></svg>
<div style="left:1495.5px;top:471px;width:8.5px;height:8.5px;background:#c4c4c4;border-radius:50%;"></div>
<!-- price chart -->
<svg style="left:855px;top:139px" width="1008" height="326" viewBox="855 139 1008 326"><defs><radialGradient id="glow" cx="1365" cy="306" r="190" gradientUnits="userSpaceOnUse"><stop offset="0" stop-color="#360000"/><stop offset="0.3" stop-color="#2b0000"/><stop offset="0.5" stop-color="#1d0000"/><stop offset="0.68" stop-color="#0d0000"/><stop offset="0.85" stop-color="#040000"/><stop offset="1" stop-color="#000000"/></radialGradient><linearGradient id="ring" gradientUnits="userSpaceOnUse" x1="1430" y1="215" x2="1300" y2="395"><stop offset="0" stop-color="#414144"/><stop offset="0.4" stop-color="#2a2a2c"/><stop offset="0.75" stop-color="#1e1e20"/><stop offset="1" stop-color="#2a2a2c"/></linearGradient><linearGradient id="ring2" gradientUnits="userSpaceOnUse" x1="1400" y1="255" x2="1310" y2="400"><stop offset="0" stop-color="#303033"/><stop offset="0.5" stop-color="#222224"/><stop offset="1" stop-color="#18181a"/></linearGradient><clipPath id="cc"><rect x="855" y="139" width="1008" height="326" rx="3"/></clipPath><clipPath id="plot"><rect x="855" y="139" width="957" height="209"/></clipPath><clipPath id="nolabel"><path d="M855 139H1863V348H855ZM855 367H1863V465H855Z"/></clipPath></defs><g clip-path="url(#cc)"><rect x="855" y="139" width="1008" height="326" fill="#000"/><g clip-path="url(#nolabel)"><circle cx="1365" cy="306" r="190" fill="url(#glow)"/><circle cx="1365" cy="304.7" r="104.8" fill="url(#ring)" stroke="#3c3c3f" stroke-width="1"/><path fill="url(#ring2)" d="M1419.3 258Q1397 252 1375 254Q1358 255.5 1344 260.6Q1328 268 1315.4 278.8Q1301 292 1292 307.3Q1284.5 321 1281.6 336Q1279 352 1283 368Q1300 398 1340 405Q1390 410 1430 385Q1412 380 1396 373.6L1375 375.4Q1362 373.5 1354 368.4Q1343 360 1339 349Q1335.5 342 1335 336Q1334.5 327 1336 320Q1341 308 1349 299.5Q1358 290 1370 284Q1382 278.5 1396 276.7Q1407 275 1416.7 274.9Z"/><path fill="url(#glow)" stroke="#303032" stroke-width="0.8" d="M1269 303A97 97 0 0 1 1463 303Q1463 326 1457 346Q1450 358 1440 362Q1422 370 1401 373Q1388 375.6 1375 375.4Q1362 373.5 1354 368.4Q1343 360 1339 349Q1335.5 342 1335 336Q1334.5 327 1336 320Q1341 308 1349 299.5Q1358 290 1370 284Q1382 278.5 1396 276.7Q1407 275 1416.7 274.9L1419.3 258Q1397 252 1375 254Q1358 255.5 1344 260.6Q1328 268 1315.4 278.8Q1301 292 1292 307.3Q1284.5 321 1281.6 336Q1279.6 343 1279 346.3Q1279.5 354 1281 360Q1276 352 1274 346Q1269 326 1269 303Z"/></g><path d="M943.5 139V348 M943.5 368V465 M1015.5 139V348 M1015.5 368V465 M1087.5 139V348 M1087.5 368V465 M1159.5 139V348 M1159.5 368V465 M1231.5 139V348 M1231.5 368V465 M1303.5 139V348 M1303.5 368V465 M1375.5 139V348 M1375.5 368V465 M1447.5 139V348 M1447.5 368V465 M1519.5 139V348 M1519.5 368V465 M1591.5 139V348 M1591.5 368V465 M1663.5 139V348 M1663.5 368V465 M1735.5 139V348 M1735.5 368V465 M1807.5 139V348 M1807.5 368V465 M1807.5 368V465 M855 151.5H1812 M855 174.5H1812 M855 198.5H1812 M855 221.5H1812 M855 245.5H1812 M855 268.5H1812 M855 292.5H1812 M855 315.5H1812 M855 339.5H1812" stroke="#222226" stroke-width="1" fill="none"/><g clip-path="url(#plot)"><path d="M871.5 215.3V241.2" stroke="#04853e" stroke-width="1"/><rect x="864" y="220.9" width="15" height="2.6" fill="#04853e"/><path d="M895.5 184.6V231.0" stroke="#04853e" stroke-width="1"/><rect x="888" y="186.1" width="15" height="35.2" fill="#04853e"/><path d="M919.5 183.9V201.9" stroke="#f05a28" stroke-width="1"/><rect x="912" y="186.1" width="15" height="12.7" fill="#f05a28"/><path d="M943.5 189.1V199.6" stroke="#04853e" stroke-width="1"/><rect x="936" y="194.0" width="15" height="5.6" fill="#04853e"/><path d="M967.5 183.9V210.5" stroke="#f05a28" stroke-width="1"/><rect x="960" y="194.4" width="15" height="2.2" fill="#f05a28"/><path d="M991.5 196.6V219.1" stroke="#f05a28" stroke-width="1"/><rect x="984" y="197.7" width="15" height="16.1" fill="#f05a28"/><path d="M1015.5 209.3V243.8" stroke="#f05a28" stroke-width="1"/><rect x="1008" y="215.3" width="15" height="28.4" fill="#f05a28"/><path d="M1039.5 230.3V246.8" stroke="#04853e" stroke-width="1"/><rect x="1032" y="242.3" width="15" height="1.2" fill="#04853e"/><path d="M1063.5 210.8V240.8" stroke="#04853e" stroke-width="1"/><rect x="1056" y="212.3" width="15" height="28.4" fill="#04853e"/><path d="M1087.5 204.9V221.7" stroke="#f05a28" stroke-width="1"/><rect x="1080" y="210.8" width="15" height="10.9" fill="#f05a28"/><path d="M1111.5 200.4V234.0" stroke="#04853e" stroke-width="1"/><rect x="1104" y="204.1" width="15" height="15.7" fill="#04853e"/><path d="M1135.5 191.8V215.0" stroke="#04853e" stroke-width="1"/><rect x="1128" y="194.0" width="15" height="11.6" fill="#04853e"/><path d="M1159.5 190.6V246.0" stroke="#f05a28" stroke-width="1"/><rect x="1152" y="192.9" width="15" height="32.9" fill="#f05a28"/><path d="M1183.5 225.1V258.0" stroke="#f05a28" stroke-width="1"/><rect x="1176" y="225.1" width="15" height="15.7" fill="#f05a28"/><path d="M1207.5 225.1V249.0" stroke="#04853e" stroke-width="1"/><rect x="1200" y="225.1" width="15" height="15.7" fill="#04853e"/><path d="M1231.5 219.1V243.0" stroke="#f05a28" stroke-width="1"/><rect x="1224" y="225.1" width="15" height="15.7" fill="#f05a28"/><path d="M1255.5 228.1V269.2" stroke="#f05a28" stroke-width="1"/><rect x="1248" y="239.3" width="15" height="19.5" fill="#f05a28"/><path d="M1279.5 251.3V290.2" stroke="#f05a28" stroke-width="1"/><rect x="1272" y="258.0" width="15" height="32.2" fill="#f05a28"/><path d="M1303.5 279.0V316.8" stroke="#f05a28" stroke-width="1"/><rect x="1296" y="289.1" width="15" height="24.0" fill="#f05a28"/><path d="M1327.5 296.9V328.0" stroke="#04853e" stroke-width="1"/><rect x="1320" y="301.0" width="15" height="13.1" fill="#04853e"/><path d="M1351.5 276.0V305.9" stroke="#04853e" stroke-width="1"/><rect x="1344" y="277.1" width="15" height="26.9" fill="#04853e"/><path d="M1375.5 274.8V295.8" stroke="#f05a28" stroke-width="1"/><rect x="1368" y="277.1" width="15" height="10.9" fill="#f05a28"/><path d="M1399.5 258.0V287.9" stroke="#04853e" stroke-width="1"/><rect x="1392" y="264.7" width="15" height="23.2" fill="#04853e"/><path d="M1423.5 259.1V272.2" stroke="#f05a28" stroke-width="1"/><rect x="1416" y="264.7" width="15" height="4.5" fill="#f05a28"/><path d="M1447.5 267.7V305.9" stroke="#f05a28" stroke-width="1"/><rect x="1440" y="267.7" width="15" height="1.2" fill="#f05a28"/><path d="M1471.5 246.0V277.8" stroke="#04853e" stroke-width="1"/><rect x="1464" y="251.6" width="15" height="18.0" fill="#04853e"/><path d="M1495.5 237.8V262.1" stroke="#f05a28" stroke-width="1"/><rect x="1488" y="249.8" width="15" height="4.5" fill="#f05a28"/><path d="M1519.5 247.1V267.0" stroke="#f05a28" stroke-width="1"/><rect x="1512" y="253.5" width="15" height="4.5" fill="#f05a28"/><path d="M1543.5 249.8V282.7" stroke="#f05a28" stroke-width="1"/><rect x="1536" y="258.0" width="15" height="15.0" fill="#f05a28"/><path d="M1567.5 252.8V282.7" stroke="#04853e" stroke-width="1"/><rect x="1560" y="256.1" width="15" height="16.1" fill="#04853e"/><path d="M1591.5 249.0V263.2" stroke="#04853e" stroke-width="1"/><rect x="1584" y="256.1" width="15" height="1.2" fill="#04853e"/><path d="M1615.5 255.7V264.7" stroke="#f05a28" stroke-width="1"/><rect x="1608" y="258.0" width="15" height="5.2" fill="#f05a28"/><path d="M1639.5 261.7V279.0" stroke="#f05a28" stroke-width="1"/><rect x="1632" y="262.9" width="15" height="13.8" fill="#f05a28"/><path d="M1663.5 260.2V284.2" stroke="#04853e" stroke-width="1"/><rect x="1656" y="260.2" width="15" height="16.5" fill="#04853e"/><path d="M1687.5 260.2V278.2" stroke="#f05a28" stroke-width="1"/><rect x="1680" y="260.2" width="15" height="8.6" fill="#f05a28"/><path d="M1711.5 240.8V273.0" stroke="#04853e" stroke-width="1"/><rect x="1704" y="249.0" width="15" height="19.8" fill="#04853e"/><path d="M1735.5 226.2V251.3" stroke="#04853e" stroke-width="1"/><rect x="1728" y="226.2" width="15" height="23.6" fill="#04853e"/><path d="M1759.5 204.9V231.0" stroke="#04853e" stroke-width="1"/><rect x="1752" y="210.1" width="15" height="16.5" fill="#04853e"/><path d="M1783.5 204.1V234.8" stroke="#f05a28" stroke-width="1"/><rect x="1776" y="210.1" width="15" height="20.6" fill="#f05a28"/><path d="M1807.5 222.8V243.8" stroke="#f05a28" stroke-width="1"/><rect x="1800" y="229.9" width="15" height="13.1" fill="#f05a28"/><polyline fill="none" stroke="#42dccf" stroke-width="1.2" points="855.2,256.9 862.1,256.2 872.1,255.3 883.5,254.2 895.0,253.1 906.0,252.1 917.4,251.1 929.7,250.1 943.6,249.0 960.0,247.9 978.4,246.7 997.1,245.5 1014.6,244.5 1030.4,243.6 1045.2,242.9 1059.8,242.2 1074.5,241.5 1089.7,240.8 1104.9,240.0 1120.0,239.4 1134.4,238.9 1148.1,238.6 1161.3,238.5 1174.1,238.5 1186.8,238.5 1199.8,238.5 1212.8,238.6 1225.0,238.7 1235.5,238.9 1243.4,239.2 1249.3,239.7 1254.9,240.2 1261.7,240.8 1270.1,241.5 1279.2,242.4 1289.0,243.3 1299.1,244.1 1309.8,244.9 1321.1,245.6 1332.6,246.4 1344.0,247.1 1355.2,247.8 1366.4,248.5 1377.6,249.2 1389.0,249.8 1400.8,250.3 1413.0,250.9 1424.9,251.3 1436.0,251.6 1445.6,251.8 1454.2,251.9 1463.1,251.9 1473.6,251.9 1486.5,251.9 1500.9,251.9 1515.6,251.9 1529.7,252.0 1542.8,252.2 1555.4,252.5 1567.8,252.9 1580.0,253.2 1592.1,253.5 1604.0,253.8 1615.6,254.1 1627.0,254.3 1638.2,254.4 1649.2,254.4 1659.9,254.4 1670.0,254.4 1679.7,254.4 1689.0,254.4 1697.7,254.4 1705.7,254.3 1712.6,254.1 1718.6,253.8 1724.2,253.5 1730.0,253.2 1735.9,252.9 1741.8,252.6 1747.8,252.3 1754.3,252.0 1761.6,251.7 1769.5,251.4 1777.4,251.1 1785.0,250.8 1792.7,250.6 1800.6,250.4 1807.5,250.2 1812.3,250.1"/></g><polyline fill="none" stroke="#0b930b" stroke-width="1" points="855.2,398.3 871.3,396.8 895.3,383.4 919.2,390.1 943.2,389.4 967.1,390.1 991.1,402.1 1015.0,417.4 1039.4,417.4 1063.3,402.5 1087.3,408.8 1111.2,400.2 1135.2,396.5 1159.1,413.3 1183.1,419.3 1207.4,413.3 1231.4,420.0 1255.3,428.3 1279.3,439.9 1303.6,449.6 1327.5,443.6 1351.5,431.3 1375.4,435.4 1399.1,424.5 1423.0,426.4 1447.0,426.4 1470.9,418.2 1494.9,418.9 1518.8,421.2 1543.2,428.3 1567.1,419.3 1591.1,419.3 1615.0,423.0 1639.0,429.4 1663.3,420.8 1687.3,425.7 1711.2,416.3 1735.2,403.6 1759.1,396.5 1783.1,407.3 1807.0,414.4 1812.3,414.4"/><path d="M855 348.5H1812" stroke="#a8a8a8" stroke-width="1"/><path d="M855 367.5H1863" stroke="#bcbcbc" stroke-width="1"/><path d="M1812.5 139V348" stroke="#8a8a8a" stroke-width="1"/><path d="M1812.5 368V465" stroke="#c8c8c8" stroke-width="1"/><path d="M872 348.5V352 M1016 348.5V352 M1160 348.5V352 M1304 348.5V352 M1448 348.5V352 M1592 348.5V352 M1736 348.5V352" stroke="#e4e4e4" stroke-width="2"/><path d="M1812 151.5H1816 M1812 174.5H1816 M1812 198.5H1816 M1812 221.5H1816 M1812 245.5H1816 M1812 268.5H1816 M1812 292.5H1816 M1812 315.5H1816 M1812 339.5H1816" stroke="#b0b0b0" stroke-width="1"/><text class="ax" x="855" y="362.6" stroke="#d8d8d8" stroke-width="0.18">Feb 10:30</text><text class="ax" x="1015.7" y="362.6" text-anchor="middle" stroke="#d8d8d8" stroke-width="0.18">12 Feb 11:00</text><text class="ax" x="1159.7" y="362.6" text-anchor="middle" stroke="#d8d8d8" stroke-width="0.18">12 Feb 11:30</text><text class="ax" x="1303.7" y="362.6" text-anchor="middle" stroke="#d8d8d8" stroke-width="0.18">12 Feb 12:00</text><text class="ax" x="1447.7" y="362.6" text-anchor="middle" stroke="#d8d8d8" stroke-width="0.18">12 Feb 12:30</text><text class="ax" x="1591.7" y="362.6" text-anchor="middle" stroke="#d8d8d8" stroke-width="0.18">12 Feb 13:00</text><text class="ax" x="1735.7" y="362.6" text-anchor="middle" stroke="#d8d8d8" stroke-width="0.18">12 Feb 13:30</text><text class="ax" x="1817" y="157.0" stroke="#d8d8d8" stroke-width="0.18">5085.00</text><text class="ax" x="1817" y="180.4" stroke="#d8d8d8" stroke-width="0.18">5080.00</text><text class="ax" x="1817" y="203.8" stroke="#d8d8d8" stroke-width="0.18">5075.00</text><text class="ax" x="1817" y="227.2" stroke="#d8d8d8" stroke-width="0.18">5070.00</text><text class="ax" x="1817" y="250.6" stroke="#d8d8d8" stroke-width="0.18">5065.00</text><text class="ax" x="1817" y="274.0" stroke="#d8d8d8" stroke-width="0.18">5060.00</text><text class="ax" x="1817" y="297.4" stroke="#d8d8d8" stroke-width="0.18">5055.00</text><text class="ax" x="1817" y="320.8" stroke="#d8d8d8" stroke-width="0.18">5050.00</text><text class="ax" x="1817" y="344.2" stroke="#d8d8d8" stroke-width="0.18">5045.00</text><text x="866" y="161.5" font-family="Liberation Sans,sans-serif" font-size="12.4" fill="#8a8a8a">Exponential Moving Average (Clos…</text><text x="1073.5" y="161" font-family="Liberation Sans,sans-serif" font-size="11.7" fill="#48d8cc">5163.88</text><text x="861" y="384" font-family="Liberation Sans,sans-serif" font-size="12.4" fill="#8a8a8a">Relative Strength Index (Close, 20)</text><text x="1058.8" y="384" font-family="Liberation Sans,sans-serif" font-size="12.4" fill="#2a8a2a">48</text><rect x="1281.5" y="145" width="138" height="21" rx="4" fill="#1f1f1f" fill-opacity="0.92"/><text x="1350.5" y="160.8" font-family="Liberation Sans,sans-serif" font-size="13.6" font-weight="700" fill="#2ec24a" text-anchor="middle">+2 766.77 $ (+277%)</text><path d="M1795 151.5H1799.5V197.5H1795" stroke="#b0b0b0" stroke-width="1" fill="none"/><text transform="translate(1796,191) rotate(-90)" font-family="Liberation Sans,sans-serif" font-size="10.6" font-weight="700" fill="#b8b8b8">1000…</text><path d="M1712.5 340.5H1729L1735 334.5L1741 340.5H1748Q1750.5 340.5 1750.5 343V353.5H1710.5V343Q1710.5 340.5 1712.5 340.5Z" fill="#000" stroke="#e0e0e0" stroke-width="1"/><path d="M1714.5 343V349M1716.5 343V349" stroke="#c8c8c8" stroke-width="1" stroke-dasharray="1 1"/></g></svg>
<!-- drawing toolbar -->
<div style="left:1875px;top:43px;width:33.5px;height:405px;background:#535353;border-radius:4px;"></div>
<svg style="left:1875px;top:43px" width="34" height="406" viewBox="0 0 34 406"><path d="M9.5 5V8.5M11.5 5V8.5M13.5 5V8.5M15.5 5V8.5M17.5 5V8.5M19.5 5V8.5M21.5 5V8.5M23.5 5V8.5M25.5 5V8.5" stroke="#777" stroke-width="1"/><rect x="6" y="12.2" width="20.8" height="20.6" rx="3" fill="#2b2b2b"/><path d="M14 17.2V27L16.3 24.9L17.9 28.6L19.5 27.9L17.9 24.3H20.9Z" fill="#fff"/><path d="M16.5 44.5V49.6M16.5 51.4V56.5M10 50.5H15.6M17.4 50.5H23" stroke="#d0d0d0" stroke-width="1"/><path d="M15.5 72.5V85.5M17.5 70.5V83.5M9.5 77.5H22.5M10.5 79.5H24.5" stroke="#d0d0d0" stroke-width="1" opacity="0.85"/><path d="M16.5 100V106M10 106.7H15" stroke="#d0d0d0" stroke-width="1.1"/><rect x="16.6" y="107" width="6.2" height="5.6" fill="#8a8a8a" stroke="#d0d0d0" stroke-width="1.1"/><path d="M3.5 120.5H28.5" stroke="#6a6a6a" stroke-width="1"/><path d="M9.2 134.9H23.8" stroke="#d0d0d0" stroke-width="2.2"/><path d="M6.2 141.2V144.79999999999998H9.8Z" fill="#e4e4e4"/><path d="M11.2 155.8Q14.6 157.6 13.9 161.2Q13 163.8 10.6 165Q9 166.6 10.4 168.4" stroke="#d0d0d0" stroke-width="1" fill="none"/><path d="M11.9 170.4L13.4 166.4L20.6 159.4L23 161.8L15.8 169Z" stroke="#d0d0d0" stroke-width="1" fill="none" stroke-linejoin="round"/><path d="M19 161L21.4 163.4" stroke="#d0d0d0" stroke-width="1"/><path d="M9.8 193L18.6 184.8M13.6 198.6L22.2 190.2" stroke="#d0d0d0" stroke-width="1.1" fill="none"/><path d="M13.9 188.6V197M15.9 187V196.4M17.9 186.2V195M19.9 187.4V193" stroke="#d0d0d0" stroke-width="1" opacity="0.8"/><text x="21" y="199.2" font-family="Liberation Sans,sans-serif" font-size="6.6" font-weight="700" fill="#e0e0e0">E</text><path d="M9.8 224.6L23 212.8M14.2 217.6L18.4 211.8M17.2 220.6L23 216.8M14.2 217.6L17.2 220.6" stroke="#d0d0d0" stroke-width="1.1" fill="none"/><path d="M9 240H24M9 244.5H24M9 249H19M9 253.5H19" stroke="#a4a4a4" stroke-width="1" stroke-dasharray="1.2 2.4"/><text x="19.8" y="254.2" font-family="Liberation Sans,sans-serif" font-size="7.4" font-weight="700" fill="#e0e0e0">F</text><path d="M6.2 253.4V257.0H9.8Z" fill="#e4e4e4"/><rect x="9.6" y="270" width="13.8" height="9" rx="0.8" fill="none" stroke="#bdbdbd" stroke-width="1.5"/><path d="M6.2 281.3V284.90000000000003H9.8Z" fill="#e4e4e4"/><path d="M16.5 297.6L21.6 303.4H18.9V308.2H14.1V303.4H11.4Z" fill="none" stroke="#d0d0d0" stroke-width="1.1" stroke-linejoin="miter"/><path d="M6.2 308.8V312.40000000000003H9.8Z" fill="#e4e4e4"/><path d="M8.2 323.7H18M8.2 332.6H18" stroke="#d0d0d0" stroke-width="1.1"/><path d="M8 337.5H24.8" stroke="#d0d0d0" stroke-width="1.6"/><path d="M10.4 331L15.4 325.4" stroke="#a8a8a8" stroke-width="0.9" stroke-dasharray="1.2 1"/><path d="M21.2 327V332.8" stroke="#d0d0d0" stroke-width="1.2"/><path d="M18.8 329.4L21.2 326.2L23.6 329.4Z" fill="#d0d0d0"/><path d="M6.2 337V340.6H9.8Z" fill="#e4e4e4"/><path d="M11.4 354.4H21.8M16.5 354.4V364.4M14.6 364.2H18.4" stroke="#d0d0d0" stroke-width="1.3"/><path d="M4 372.8H30" stroke="#6a6a6a" stroke-width="1"/><circle cx="12.6" cy="389.2" r="1.9" fill="#f4f4f4"/><circle cx="17.8" cy="389.2" r="1.9" fill="#f4f4f4"/><circle cx="23" cy="389.2" r="1.9" fill="#f4f4f4"/></svg>
<!-- bottom panel -->
<div style="left:428px;top:492px;width:57px;height:27.5px;background:#535353;border-radius:4px 4px 0 0;"></div>
<div class="t" style="left:428px;width:57px;text-align:center;top:499.0px;height:16px;line-height:16px;color:#fff;font-size:12.4px;font-weight:400;">Equity</div>
<div style="left:489.5px;top:492px;width:96.3px;height:27.5px;background:#3c3c3c;border-radius:4px 4px 0 0;"></div>
<div class="t" style="left:489.5px;width:96.3px;text-align:center;top:499.0px;height:16px;line-height:16px;color:#fff;font-size:12.4px;font-weight:400;">Trade statistics</div>
<div style="left:592px;top:492px;width:89px;height:27.5px;background:#3c3c3c;border-radius:4px 4px 0 0;"></div>
<div style="left:686px;top:492px;width:77px;height:27.5px;background:#3c3c3c;border-radius:4px 4px 0 0;"></div>
<div style="left:768px;top:492px;width:57px;height:27.5px;background:#3c3c3c;border-radius:4px 4px 0 0;"></div>
<div class="t" style="left:768px;width:57px;text-align:center;top:499.0px;height:16px;line-height:16px;color:#fff;font-size:12.4px;font-weight:400;">History</div>
<div style="left:830px;top:492px;width:57px;height:27.5px;background:#3c3c3c;border-radius:4px 4px 0 0;"></div>
<div class="t" style="left:830px;width:57px;text-align:center;top:499.0px;height:16px;line-height:16px;color:#fff;font-size:12.4px;font-weight:400;">Events</div>
<div style="left:892px;top:492px;width:57px;height:27.5px;background:#3c3c3c;border-radius:4px 4px 0 0;"></div>
<div class="t" style="left:892px;width:57px;text-align:center;top:499.0px;height:16px;line-height:16px;color:#fff;font-size:12.4px;font-weight:400;">Logs</div>
<div class="t" style="left:598.7px;top:498.2px;height:16px;line-height:16px;color:#fff;font-size:12.4px;font-weight:400;">Positions</div>
<div style="left:654.2px;top:497.2px;width:17.8px;height:16.4px;background:#0a9a4a;border-radius:3px;"></div>
<div class="t" style="left:654.2px;width:17.8px;text-align:center;top:497.4px;height:16px;line-height:16px;color:#fff;font-size:11.2px;font-weight:700;">1</div>
<div class="t" style="left:693px;top:498.2px;height:16px;line-height:16px;color:#fff;font-size:12.4px;font-weight:400;">Orders</div>
<div style="left:736.3px;top:497.2px;width:17.6px;height:16.4px;background:#7c7c7c;border-radius:3px;"></div>
<div class="t" style="left:736.3px;width:17.6px;text-align:center;top:497.4px;height:16px;line-height:16px;color:#fff;font-size:11.2px;font-weight:700;">0</div>
<div style="left:428px;top:519px;width:1481px;height:443px;background:#535353;border-radius:0 4px 0 0;"></div>
<svg style="left:434px;top:526px" width="1469" height="430" viewBox="434 526 1469 430"><rect x="434" y="526" width="1469" height="430" fill="#000"/><path d="M445.5 526V929 M499.5 526V929 M553.5 526V929 M606.5 526V929 M660.5 526V929 M714.5 526V929 M767.5 526V929 M821.5 526V929 M874.5 526V929 M928.5 526V929 M982.5 526V929 M1035.5 526V929 M1089.5 526V929 M1143.5 526V929 M1196.5 526V929 M1250.5 526V929 M1303.5 526V929 M1357.5 526V929 M1411.5 526V929 M1464.5 526V929 M1518.5 526V929 M1572.5 526V929 M1625.5 526V929 M1679.5 526V929 M1733.5 526V929 M1786.5 526V929 M1840.5 526V929 M434 564.5H1857 M434 595.5H1857 M434 625.5H1857 M434 656.5H1857 M434 686.5H1857 M434 717.5H1857 M434 748.5H1857 M434 778.5H1857 M434 809.5H1857 M434 839.5H1857 M434 870.5H1857 M434 900.5H1857" stroke="#25252a" stroke-width="1" fill="none"/><polyline fill="none" stroke="#9a9a9a" stroke-width="1.6" stroke-linejoin="miter" points="446.8,901.3 450.6,902.7 454.3,900.2 458.1,906.3 461.8,901.5 466.9,907.7 471.9,910.1 476.9,905.2 485.7,900.2 498.2,895.0 510.8,888.4 515.8,885.9 519.6,896.3 523.3,896.4 527.1,898.9 530.4,897.5 533.9,901.5 538.4,895.2 542.1,901.3 547.2,896.9 550.9,903.5 556.0,895.5 558.5,898.9 560.5,919.0 562.2,912.6 566.0,908.5 576.0,902.7 591.1,893.8 606.1,881.4 628.7,866.8 630.7,872.9 635.0,865.8 638.3,873.3 647.5,864.4 662.6,850.8 664.4,854.3 668.9,853.1 673.9,865.1 680.2,855.0 683.9,851.9 687.2,855.0 696.0,845.7 700.2,860.4 701.5,853.8 704.0,860.0 716.6,851.9 719.1,855.8 722.8,853.8 727.8,847.3 741.6,836.2 758.0,825.4 760.0,831.8 762.2,823.2 766.7,845.7 768.7,836.1 776.8,827.4 781.3,838.2 786.8,836.1 794.3,827.4 803.1,821.2 810.7,812.2 813.2,796.1 817.4,816.1 821.9,800.2 826.5,811.9 833.2,802.3 841.5,798.4 845.8,808.6 849.6,802.3 852.1,809.2 860.8,798.1 863.4,802.3 872.1,797.2 874.6,801.1 877.2,799.8 880.2,805.2 883.4,801.1 888.4,783.5 891.5,767.4 895.3,737.5 899.6,771.3 901.1,718.5 905.3,728.7 908.6,746.2 910.4,783.7 912.1,757.5 914.6,763.8 921.1,758.6 923.7,762.6 927.9,753.8 933.7,749.9 936.2,753.8 938.2,766.8 940.7,760.4 943.2,759.3 947.2,771.8 949.3,773.7 951.3,778.9 953.8,762.6 957.3,755.4 961.3,730.7 965.6,742.5 968.3,753.6 970.6,776.4 973.1,792.7 974.9,815.1 977.9,814.5 978.9,797.7 986.9,792.5 989.9,795.9 991.9,792.7 997.4,789.5 1000.7,794.4 1004.5,788.9 1007.0,788.8 1010.7,778.9 1018.3,769.3 1025.8,758.6 1030.8,751.3 1032.1,746.2 1034.6,752.4 1038.3,747.5 1047.1,739.5 1050.1,745.3 1062.2,734.5 1064.7,740.0 1068.5,738.1 1072.7,730.7 1075.2,729.2 1078.5,719.7 1082.3,709.9 1089.8,703.6 1097.8,695.2 1101.1,699.8 1103.6,694.8 1111.1,690.1 1113.6,694.8 1122.4,684.8 1124.9,690.9 1127.4,688.5 1131.2,699.1 1133.2,687.1 1137.0,699.1 1139.5,687.3 1142.0,692.1 1145.5,687.3 1149.5,691.5 1153.8,699.7 1162.6,691.0 1166.3,683.5 1170.1,679.6 1175.6,669.2 1178.1,676.0 1180.1,675.8 1183.1,680.5 1186.4,674.7 1192.7,670.8 1201.4,659.7 1205.2,664.7 1212.7,659.0 1214.7,662.2 1225.3,655.9 1237.8,644.5 1247.9,637.1 1251.6,629.6 1255.4,626.9 1257.9,631.3 1259.9,627.8 1262.4,633.2 1269.2,628.8 1271.7,633.8 1274.2,632.4 1278.0,635.8 1281.8,634.6 1288.0,629.4 1290.5,633.3 1292.5,620.8 1296.8,625.6 1306.8,618.3 1309.4,623.3 1315.1,617.4 1318.6,622.0 1330.7,612.0 1334.4,620.6 1337.0,610.7 1341.2,604.5 1344.2,610.1 1347.5,606.3 1350.2,612.6 1360.5,607.4 1363.2,592.7 1369.2,580.0 1373.6,593.8 1376.3,607.7 1378.2,628.9 1381.7,630.5 1383.6,623.4 1390.4,616.4 1395.0,630.0 1397.2,622.6 1401.8,619.9 1405.9,631.9 1412.7,622.6 1418.2,615.3 1420.9,622.4 1425.2,619.1 1433.9,611.8 1436.1,616.4 1442.6,599.5 1446.1,593.5 1448.1,599.3 1452.9,595.4 1455.1,603.6 1457.0,597.9 1463.3,591.9 1467.9,603.6 1474.1,601.2 1476.9,605.0 1488.3,598.2 1499.2,589.8 1504.0,585.4 1506.8,591.9 1510.6,589.8 1513.3,592.7 1515.5,590.8 1518.2,597.4 1524.2,591.9 1528.5,601.7 1542.6,592.5 1544.8,596.3 1549.4,591.9 1552.2,598.5 1556.2,595.4 1563.0,586.8 1570.6,582.4 1573.9,586.8 1575.8,585.4 1578.0,591.9 1584.8,583.8 1590.2,580.0 1592.9,586.5 1598.4,573.7 1606.5,565.5 1611.1,561.2 1613.3,564.7 1617.4,562.8 1620.1,570.2 1622.0,567.5 1624.7,572.3 1631.0,568.6 1632.9,571.8 1635.1,570.2 1640.0,583.0 1641.9,581.0 1643.8,585.4 1645.9,585.7 1650.0,590.8 1656.3,578.6 1660.9,589.8 1662.8,587.3 1665.5,594.1 1669.0,589.8 1676.4,583.8 1678.5,590.8 1688.1,584.3 1692.1,587.3 1697.6,596.8 1705.2,593.0 1707.9,595.4 1711.2,593.5 1715.2,600.6 1720.7,590.8 1723.4,595.4 1731.6,589.8 1733.5,581.9 1735.6,587.3 1742.4,580.2 1745.1,569.6 1749.2,560.1 1751.4,560.4 1754.1,565.5 1756.0,566.4 1764.2,555.8 1767.7,544.6 1775.0,538.4 1776.9,544.9 1781.3,540.3 1784.0,544.6 1787.3,544.1 1790.0,547.9 1793.3,545.2 1796.0,550.3 1800.9,547.3 1806.8,540.3 1809.6,546.8 1811.7,544.6 1813.9,549.2 1815.8,548.4 1819.9,559.3 1826.7,553.9 1830.2,562.0 1838.9,556.0 1841.6,562.0 1843.8,559.3 1847.1,563.6"/><polyline fill="none" stroke="#f8f812" stroke-width="1.7" stroke-linejoin="miter" points="445.3,899.5 449.1,902.0 452.8,899.5 456.6,904.5 460.3,900.8 465.4,907.0 470.4,908.3 475.4,904.5 484.2,899.5 496.7,893.2 509.3,887.7 514.3,885.2 518.1,894.5 521.8,895.7 525.6,898.2 528.9,895.7 532.4,900.8 536.9,894.5 540.6,899.5 545.7,896.2 549.4,902.8 554.5,893.7 557.0,898.2 559.0,918.3 560.7,910.8 564.5,907.8 574.5,902.0 589.6,892.0 604.6,880.7 627.2,866.1 629.2,871.1 633.5,865.1 636.8,872.6 646.0,862.6 661.1,850.1 662.9,853.6 667.4,851.3 672.4,864.4 678.7,854.3 682.4,850.1 685.7,854.3 694.5,845.0 698.7,858.6 700.0,853.1 702.5,859.3 715.1,850.1 717.6,855.1 721.3,853.1 726.3,845.5 740.1,835.5 756.5,824.7 758.5,830.0 760.7,822.5 765.2,845.0 767.2,834.3 775.3,826.7 779.8,837.5 785.3,834.3 792.8,826.7 801.6,820.5 809.2,810.4 811.7,795.4 815.9,815.4 820.4,798.4 825.0,811.2 831.7,801.6 840.0,796.6 844.3,807.9 848.1,801.6 850.6,807.4 859.3,797.4 861.9,801.6 870.6,795.4 873.1,800.4 875.7,799.1 878.7,803.4 881.9,800.4 886.9,782.8 890.0,765.6 893.8,736.8 898.1,770.6 899.6,716.7 903.8,728.0 907.1,745.5 908.9,781.9 910.6,756.8 913.1,763.1 919.6,756.8 922.2,761.9 926.4,753.1 932.2,748.1 934.7,753.1 936.7,766.1 939.2,758.6 941.7,758.6 945.7,771.1 947.8,771.9 949.8,778.2 952.3,761.9 955.8,753.6 959.8,730.0 964.1,741.8 966.8,751.8 969.1,775.7 971.6,792.0 973.4,813.3 976.4,813.8 977.4,797.0 985.4,790.7 988.4,795.2 990.4,792.0 995.9,787.7 999.2,793.7 1003.0,788.2 1005.5,787.0 1009.2,778.2 1016.8,768.6 1024.3,756.8 1029.3,750.6 1030.6,745.5 1033.1,750.6 1036.8,746.8 1045.6,738.8 1048.6,743.5 1060.7,733.8 1063.2,739.3 1067.0,736.3 1071.2,730.0 1073.7,728.5 1077.0,717.9 1080.8,709.2 1088.3,702.9 1096.3,693.4 1099.6,699.1 1102.1,694.1 1109.6,688.3 1112.1,694.1 1120.9,684.1 1123.4,689.1 1125.9,687.8 1129.7,698.4 1131.7,685.3 1135.5,698.4 1138.0,686.6 1140.5,690.3 1144.0,686.6 1148.0,690.8 1152.3,697.9 1161.1,690.3 1164.8,682.8 1168.6,677.8 1174.1,668.5 1176.6,675.3 1178.6,674.0 1181.6,679.8 1184.9,674.0 1191.2,669.0 1199.9,659.0 1203.7,664.0 1211.2,657.2 1213.2,661.5 1223.8,655.2 1236.3,642.7 1246.4,636.4 1250.1,628.9 1253.9,625.1 1256.4,630.6 1258.4,627.1 1260.9,631.4 1267.7,628.1 1270.2,633.1 1272.7,630.6 1276.5,635.1 1280.3,633.9 1286.5,627.6 1289.0,632.6 1291.0,620.1 1295.3,623.8 1305.3,617.6 1307.9,622.6 1313.6,615.6 1317.1,621.3 1329.2,611.3 1332.9,618.8 1335.5,610.0 1339.7,603.8 1342.7,608.3 1346.0,605.6 1348.7,611.9 1359.0,605.6 1361.7,592.0 1367.7,579.3 1372.1,592.0 1374.8,607.0 1376.7,628.2 1380.2,628.7 1382.1,622.7 1388.9,615.7 1393.5,628.2 1395.7,621.9 1400.3,619.2 1404.4,630.1 1411.2,621.9 1416.7,614.6 1419.4,620.6 1423.7,618.4 1432.4,611.1 1434.6,614.6 1441.1,598.8 1444.6,592.8 1446.6,597.5 1451.4,594.7 1453.6,602.9 1455.5,596.1 1461.8,591.2 1466.4,602.9 1472.6,599.4 1475.4,604.3 1486.8,597.5 1497.7,588.0 1502.5,584.7 1505.3,591.2 1509.1,588.0 1511.8,592.0 1514.0,590.1 1516.7,595.6 1522.7,591.2 1527.0,601.0 1541.1,590.7 1543.3,595.6 1547.9,591.2 1550.7,596.7 1554.7,594.7 1561.5,586.1 1569.1,580.6 1572.4,586.1 1574.3,584.7 1576.5,590.1 1583.3,583.1 1588.7,579.3 1591.4,584.7 1596.9,573.0 1605.0,564.8 1609.6,559.4 1611.8,564.0 1615.9,562.1 1618.6,568.4 1620.5,566.8 1623.2,571.6 1629.5,566.8 1631.4,571.1 1633.6,569.5 1638.5,581.2 1640.4,580.3 1642.3,584.7 1644.4,583.9 1648.5,590.1 1654.8,577.9 1659.4,588.0 1661.3,586.6 1664.0,593.4 1667.5,588.0 1674.9,583.1 1677.0,590.1 1686.6,582.5 1690.6,586.6 1696.1,596.1 1703.7,591.2 1706.4,594.7 1709.7,592.8 1713.7,598.8 1719.2,590.1 1721.9,594.7 1730.1,588.0 1732.0,581.2 1734.1,586.6 1740.9,578.4 1743.6,568.9 1747.7,559.4 1749.9,558.6 1752.6,564.8 1754.5,565.7 1762.7,554.0 1766.2,543.9 1773.5,537.7 1775.4,543.1 1779.8,539.6 1782.5,543.9 1785.8,542.3 1788.5,547.2 1791.8,544.5 1794.5,548.5 1799.4,546.6 1805.3,539.6 1808.1,545.0 1810.2,543.9 1812.4,548.5 1814.3,546.6 1818.4,558.6 1825.2,553.2 1828.7,560.2 1837.4,555.3 1840.1,561.3 1842.3,557.5 1845.6,562.9"/><path d="M434 929.5H1857.5V526" stroke="#a8a8a8" stroke-width="1" fill="none"/><path d="M445.5 929V932 M499.5 929V932 M553.5 929V932 M606.5 929V932 M660.5 929V932 M714.5 929V932 M767.5 929V932 M821.5 929V932 M874.5 929V932 M928.5 929V932 M982.5 929V932 M1035.5 929V932 M1089.5 929V932 M1143.5 929V932 M1196.5 929V932 M1250.5 929V932 M1303.5 929V932 M1357.5 929V932 M1411.5 929V932 M1464.5 929V932 M1518.5 929V932 M1572.5 929V932 M1625.5 929V932 M1679.5 929V932 M1733.5 929V932 M1786.5 929V932 M1840.5 929V932 M1857 564.5H1861.5 M1857 595.5H1861.5 M1857 625.5H1861.5 M1857 656.5H1861.5 M1857 686.5H1861.5 M1857 717.5H1861.5 M1857 748.5H1861.5 M1857 778.5H1861.5 M1857 809.5H1861.5 M1857 839.5H1861.5 M1857 870.5H1861.5 M1857 900.5H1861.5" stroke="#b0b0b0" stroke-width="1"/><text class="ax" x="445.4" y="944" text-anchor="middle" style="font-size:11.8px;fill:#c4c4c4">0</text><text class="ax" x="499.0" y="944" text-anchor="middle" style="font-size:11.8px;fill:#c4c4c4">25</text><text class="ax" x="552.7" y="944" text-anchor="middle" style="font-size:11.8px;fill:#c4c4c4">50</text><text class="ax" x="606.3" y="944" text-anchor="middle" style="font-size:11.8px;fill:#c4c4c4">75</text><text class="ax" x="659.9" y="944" text-anchor="middle" style="font-size:11.8px;fill:#c4c4c4">100</text><text class="ax" x="713.5" y="944" text-anchor="middle" style="font-size:11.8px;fill:#c4c4c4">125</text><text class="ax" x="767.2" y="944" text-anchor="middle" style="font-size:11.8px;fill:#c4c4c4">150</text><text class="ax" x="820.8" y="944" text-anchor="middle" style="font-size:11.8px;fill:#c4c4c4">175</text><text class="ax" x="874.4" y="944" text-anchor="middle" style="font-size:11.8px;fill:#c4c4c4">200</text><text class="ax" x="928.1" y="944" text-anchor="middle" style="font-size:11.8px;fill:#c4c4c4">225</text><text class="ax" x="981.7" y="944" text-anchor="middle" style="font-size:11.8px;fill:#c4c4c4">250</text><text class="ax" x="1035.3" y="944" text-anchor="middle" style="font-size:11.8px;fill:#c4c4c4">275</text><text class="ax" x="1089.0" y="944" text-anchor="middle" style="font-size:11.8px;fill:#c4c4c4">300</text><text class="ax" x="1142.6" y="944" text-anchor="middle" style="font-size:11.8px;fill:#c4c4c4">325</text><text class="ax" x="1196.2" y="944" text-anchor="middle" style="font-size:11.8px;fill:#c4c4c4">350</text><text class="ax" x="1249.8" y="944" text-anchor="middle" style="font-size:11.8px;fill:#c4c4c4">375</text><text class="ax" x="1303.5" y="944" text-anchor="middle" style="font-size:11.8px;fill:#c4c4c4">400</text><text class="ax" x="1357.1" y="944" text-anchor="middle" style="font-size:11.8px;fill:#c4c4c4">425</text><text class="ax" x="1410.7" y="944" text-anchor="middle" style="font-size:11.8px;fill:#c4c4c4">450</text><text class="ax" x="1464.4" y="944" text-anchor="middle" style="font-size:11.8px;fill:#c4c4c4">475</text><text class="ax" x="1518.0" y="944" text-anchor="middle" style="font-size:11.8px;fill:#c4c4c4">500</text><text class="ax" x="1571.6" y="944" text-anchor="middle" style="font-size:11.8px;fill:#c4c4c4">525</text><text class="ax" x="1625.3" y="944" text-anchor="middle" style="font-size:11.8px;fill:#c4c4c4">550</text><text class="ax" x="1678.9" y="944" text-anchor="middle" style="font-size:11.8px;fill:#c4c4c4">575</text><text class="ax" x="1732.5" y="944" text-anchor="middle" style="font-size:11.8px;fill:#c4c4c4">600</text><text class="ax" x="1786.2" y="944" text-anchor="middle" style="font-size:11.8px;fill:#c4c4c4">625</text><text class="ax" x="1839.8" y="944" text-anchor="middle" style="font-size:11.8px;fill:#c4c4c4">650</text><text class="ax" x="1863.5" y="567.9" style="font-size:12px;fill:#c8c8c8">3750</text><text class="ax" x="1863.5" y="598.4" style="font-size:12px;fill:#c8c8c8">3500</text><text class="ax" x="1863.5" y="629.0" style="font-size:12px;fill:#c8c8c8">3250</text><text class="ax" x="1863.5" y="659.5" style="font-size:12px;fill:#c8c8c8">3000</text><text class="ax" x="1863.5" y="690.1" style="font-size:12px;fill:#c8c8c8">2750</text><text class="ax" x="1863.5" y="720.6" style="font-size:12px;fill:#c8c8c8">2500</text><text class="ax" x="1863.5" y="751.2" style="font-size:12px;fill:#c8c8c8">2250</text><text class="ax" x="1863.5" y="781.7" style="font-size:12px;fill:#c8c8c8">2000</text><text class="ax" x="1863.5" y="812.3" style="font-size:12px;fill:#c8c8c8">1750</text><text class="ax" x="1863.5" y="842.8" style="font-size:12px;fill:#c8c8c8">1500</text><text class="ax" x="1863.5" y="873.4" style="font-size:12px;fill:#c8c8c8">1250</text><text class="ax" x="1863.5" y="903.9" style="font-size:12px;fill:#c8c8c8">1000</text><rect x="445" y="887" width="74" height="29" fill="#2a2a2a" fill-opacity="0.78"/><path d="M447 895H468" stroke="#f4f41a" stroke-width="2"/><path d="M447 909.5H468" stroke="#8a8a8a" stroke-width="2"/><text x="474" y="899" font-family="Liberation Sans,sans-serif" font-size="12" fill="#fff">Balance</text><text x="474" y="913" font-family="Liberation Sans,sans-serif" font-size="12" fill="#fff">Equity</text></svg>
</div></body></html>
